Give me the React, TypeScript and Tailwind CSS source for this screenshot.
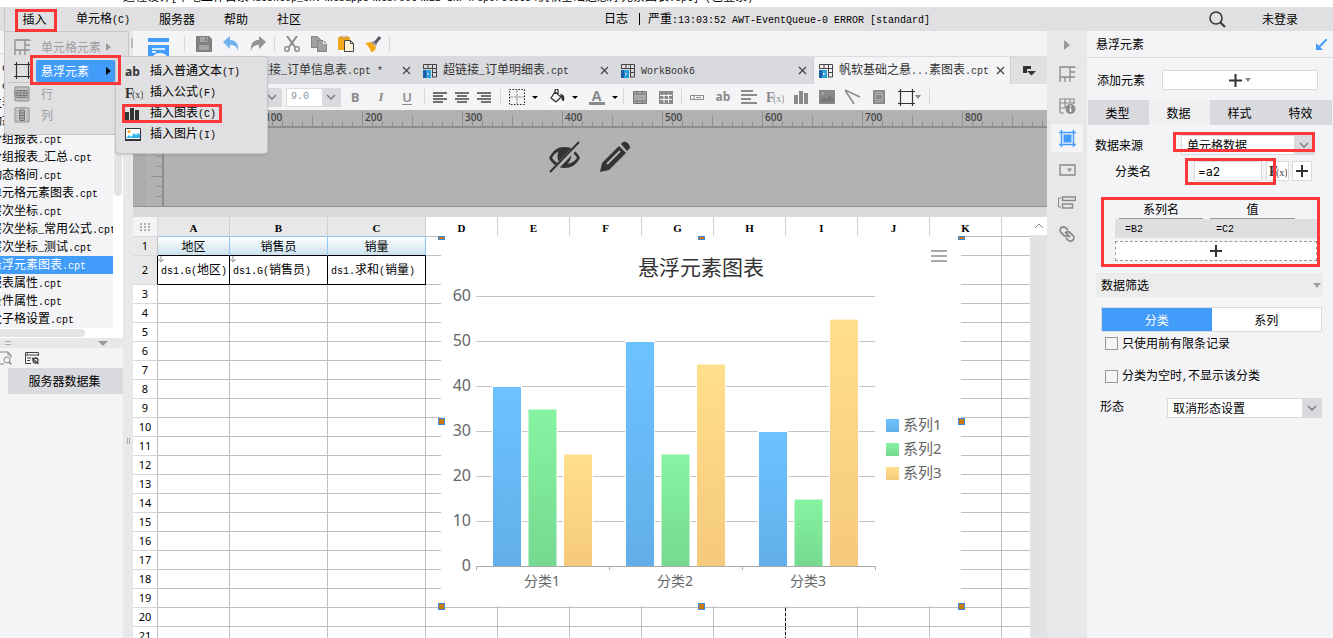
import { Fragment, type ReactNode } from 'react';

const MARK = 'pointer-events-none absolute z-40 border-[3px] border-[#fb3737]';

const files = [
  't.cpt',
  't.cpt',
  '主表.cpt',
  '动态.cpt',
  '分组报表.cpt',
  '分组报表_汇总.cpt',
  '动态格间.cpt',
  '单元格元素图表.cpt',
  '层次坐标.cpt',
  '层次坐标_常用公式.cpt',
  '层次坐标_测试.cpt',
  '悬浮元素图表.cpt',
  '报表属性.cpt',
  '条件属性.cpt',
  '父子格设置.cpt',
];

const columns = ['A', 'B', 'C', 'D', 'E', 'F', 'G', 'H', 'I', 'J', 'K', ''];

const series = [
  { name: '系列1', fill: 'url(#blue)', values: [40, 50, 30] },
  { name: '系列2', fill: 'url(#green)', values: [35, 25, 15] },
  { name: '系列3', fill: 'url(#yellow)', values: [25, 45, 55] },
];

// Latin runs use a half-width mono face next to the full-width characters
function T({ children }: { children: string }) {
  const parts = children.split(/([\x20-\x7e]+)/);
  return (
    <>
      {parts.map((part, i) =>
        i % 2 ? (
          <span key={i} className="font-['Liberation_Mono',monospace] text-[10px] whitespace-pre">
            {part}
          </span>
        ) : (
          <Fragment key={i}>{part}</Fragment>
        )
      )}
    </>
  );
}

function Icon({ w = 16, h = 16, children }: { w?: number; h?: number; children: ReactNode }) {
  return (
    <svg width={w} height={h} viewBox={`0 0 ${w} ${h}`} fill="none" className="shrink-0" aria-hidden="true">
      {children}
    </svg>
  );
}

function Chevron() {
  return (
    <Icon w={10} h={6}>
      <path d="M1 1l4 4 4-4" stroke="#777" strokeWidth="1.3" />
    </Icon>
  );
}

function Plus({ size = 13 }: { size?: number }) {
  return (
    <Icon w={size} h={size}>
      <path d={`M${size / 2} 0v${size}M0 ${size / 2}h${size}`} stroke="#333" strokeWidth="2" />
    </Icon>
  );
}

function Fx({ color = '#333' }: { color?: string }) {
  return (
    <Icon w={18} h={14}>
      <text x="0" y="12" fontSize="14" fontWeight="700" fill={color} fontFamily="Liberation Serif, serif">F</text>
      <text x="7" y="12" fontSize="10" fill={color} fontFamily="Liberation Serif, serif">(x)</text>
    </Icon>
  );
}

function Bars({ color = '#333' }: { color?: string }) {
  return (
    <Icon w={14} h={14}>
      <path d="M0 5h4v9H0zM5 1h4v13H5zM10 3h4v11h-4z" fill={color} />
    </Icon>
  );
}

function CellIcon({ color = '#8a8a8a' }: { color?: string }) {
  return (
    <Icon w={17} h={17}>
      <path d="M1 .5v15.500M1 1h10M11 1v10M1 11h15M11 6h5M11 1h5M6 11v5M11 11v5M16 1v1" stroke={color} strokeWidth="1.300" />
    </Icon>
  );
}

function FrameIcon({ color = '#333' }: { color?: string }) {
  return (
    <Icon w={17} h={17}>
      <path d="M2.500 0v17M14.500 0v17M0 2.500h17M0 14.500h17" stroke={color} strokeWidth="1.2" />
    </Icon>
  );
}

function BookIcon() {
  return (
    <Icon w={14} h={14}>
      <path d="M.5 5V.5h13v12.500H10M.5 4.500h13M5 .5v4M9.500 .5v13M9.500 8.500h4" stroke="#444" strokeWidth="1" />
      <path d="M0 6h4v8H0z" fill="#1c5fa8" />
      <path d="M3 6h5v8H3v-3h2.500V9H3z" fill="#27a0dc" />
    </Icon>
  );
}

function Sep({ className = 'mx-[5px]' }: { className?: string }) {
  return <span className={`h-4 w-px shrink-0 bg-[#d8d8dc] ${className}`} />;
}

function ToolButton({ label, className = 'w-[26px]', children }: { label: string; className?: string; children: ReactNode }) {
  return (
    <button aria-label={label} className={`flex h-5 shrink-0 items-center justify-center ${className}`}>
      {children}
    </button>
  );
}

function InsertMenu() {
  return (
    <div className="absolute top-6 left-0 z-30 w-[125px] rounded-b border border-[#c6c6ca] bg-[#e0e0e2] pt-[3px] pb-[9px] text-[#9c9c9f]">
      <button className="flex h-6 w-full items-center pl-[9px]">
        <CellIcon color="#8f8f92" />
        <span className="ml-[10px]">单元格元素</span>
        <span className="ml-[5px] border-y-4 border-l-[5px] border-y-transparent border-l-[#999]" />
      </button>
      <div className="relative flex h-[23px] items-center pl-[9px]">
        <FrameIcon />
        <button className="absolute right-[13px] left-[31px] flex h-[22px] items-center rounded-xs bg-[#429cf9] pl-[5px] text-white">
          悬浮元素
          <span className="ml-[17px] border-y-4 border-l-[5px] border-y-transparent border-l-black" />
        </button>
        <span className={`${MARK} -top-1 left-[25px] h-[30px] w-[91px]`} />
      </div>
      <div className="mx-[3px] h-px bg-[#c6c6ca]" />
      <button className="flex h-[21px] w-full items-center pl-[9px]">
        <Icon>
          <path d="M1 1h14v14H1zM0 5h2v5H0z" fill="#c0c0c2" stroke="#8f8f92" />
          <path d="M3 4.500h10v7H3zM3 7h10M3 9.500h10M6.500 4.500v7M10 4.500v7" stroke="#77777a" />
        </Icon>
        <span className="ml-[11px]">行</span>
      </button>
      <button className="flex h-[21px] w-full items-center pl-[9px]">
        <Icon>
          <path d="M1 1h14v14H1zM5 0h6" fill="#d4d4d6" stroke="#8f8f92" />
          <path d="M5.500 3v10.500h5V3zM5.500 6h5M5.500 8.500h5M5.500 11h5" fill="#aaa" stroke="#77777a" />
          <path d="M3 3v11M13 3v11" stroke="#8f8f92" strokeDasharray="1.500 1" />
        </Icon>
        <span className="ml-[11px]">列</span>
      </button>

      <div className="absolute top-6 left-[110px] w-[153px] rounded border border-[#c6c6ca] bg-[#e0e0e2] pt-1 pb-2 text-black shadow-sm">
        {[
          { text: '插入普通文本(T)', icon: <b className="font-['Open_Sans',sans-serif] text-xs leading-none text-[#333]">ab</b> },
          { text: '插入公式(F)', icon: <Fx /> },
          { text: '插入图表(C)', icon: <Bars />, marked: true },
          {
            text: '插入图片(I)',
            icon: (
              <Icon w={16} h={13}>
                <path d="M.5.5h15v12H.5z" fill="#fff" stroke="#333" />
                <path d="M1 10l3-3 2 2 3-4 2 2 2-2 2 2v3H1z" fill="#35b5ee" />
                <circle cx="4" cy="3.500" r="1.500" fill="#f5a623" />
                <path d="M0 11h16v2H0z" fill="#333" />
              </Icon>
            ),
          },
        ].map(item => (
          <button key={item.text} className="relative flex h-[21px] w-full items-center pl-[9px]">
            <span className="mr-[9px] flex w-4 shrink-0 items-center justify-start">{item.icon}</span>
            <span className="whitespace-nowrap">
              <T>{item.text}</T>
            </span>
            {item.marked && <span className={`${MARK} top-px left-[6px] h-[19px] w-[100px]`} />}
          </button>
        ))}
      </div>
    </div>
  );
}

function MenuBar() {
  return (
    <nav className="relative z-20 flex h-6 shrink-0 items-center bg-[#e0e0e2]">
      <div className="relative ml-1 h-6 w-[53px] border-x border-[#c6c6ca]">
        <button className="h-6 w-full pl-2">插入</button>
        <span className={`${MARK} top-[2px] left-[10px] h-[23px] w-[42px]`} />
      </div>
      <div className="absolute top-0 left-1">
        <InsertMenu />
      </div>
      <button className="ml-[19px] w-[83px] text-left">
        <T>单元格(C)</T>
      </button>
      <button className="w-[65px] text-left">服务器</button>
      <button className="w-[53px] text-left">帮助</button>
      <button>社区</button>
      <div className="ml-auto w-[605px] whitespace-nowrap">
        日志<span className="mr-2 ml-[11px] inline-block h-3 w-px bg-black align-middle" />
        <T>严重:13:03:52 AWT-EventQueue-0 ERROR [standard]</T>
      </div>
      <button aria-label="搜索">
        <Icon w={17} h={17}>
          <circle cx="7" cy="7" r="6" stroke="#333" strokeWidth="1.500" />
          <path d="M11.500 11.500l4.500 4.500" stroke="#333" strokeWidth="2" />
        </Icon>
      </button>
      <button className="mr-[35px] ml-9">未登录</button>
    </nav>
  );
}

function LeftPanel() {
  return (
    <aside className="flex w-[123px] shrink-0 flex-col overflow-hidden bg-[#f4f4f7]">
      <div className="h-[23px] shrink-0 border-b border-[#dcdce0]" />
      <div className="flex pt-1">
        <ul className="min-w-0 flex-1 overflow-hidden">
          {files.map((file, i) => (
            <li key={i} className={`flex h-[18px] items-center whitespace-nowrap ${i === 11 ? 'bg-[#429cf9] text-white' : ''}`}>
              <span className="-ml-[10px]">
                <T>{file}</T>
              </span>
            </li>
          ))}
        </ul>
        <div className="w-[10px] shrink-0 bg-white px-px">
          <div className="h-[138px] rounded-b bg-[#e4e4e6]" />
        </div>
      </div>
      <div className="flex h-[10px] shrink-0 items-center bg-white pb-px">
        <div className="h-2 w-[85px] rounded-r bg-[#e4e4e6]" />
      </div>
      <div className="flex h-[10px] shrink-0 items-center justify-between bg-[#e8e8e8] pr-[15px] pl-[5px]">
        <span className="h-1 w-[6px] border-y border-[#aaa]" />
        <span className="border-x-[5px] border-t-[5px] border-x-transparent border-t-[#999]" />
      </div>
      <div className="flex h-5 shrink-0 items-center gap-[13px]">
        <button aria-label="预览数据">
          <Icon w={12} h={14}>
            <path d="M0 1h8l3 3v3M8 1v3h3M0 13h4" stroke="#888" />
            <circle cx="7" cy="9" r="3" stroke="#888" />
            <path d="M9 11l2.500 2.500" stroke="#888" strokeWidth="1.500" />
          </Icon>
        </button>
        <button aria-label="编辑数据集">
          <Icon w={14} h={14}>
            <path d="M13.500 5V1.500H.5v11H6M.5 4h13M2 2.800h1M2 7h4M2 9.500h3" stroke="#444" />
            <path d="M7 7l6.500 6" stroke="#444" strokeWidth="1.300" />
            <circle cx="10.500" cy="9.500" r="2.500" stroke="#444" strokeWidth="1.300" />
          </Icon>
        </button>
      </div>
      <div className="flex h-[26px] shrink-0 pl-2">
        <button className="flex-1 bg-[#d9dade] pr-[2px]">服务器数据集</button>
      </div>
    </aside>
  );
}

function TopTools() {
  return (
    <div className="flex h-[25px] shrink-0 items-center bg-[#f4f4f7]">
      <button aria-label="模板" className="ml-[15px] self-end">
        <Icon w={21} h={18}>
          <path d="M0 0h21v4H0zM0 7h21v11h-2a8 6 0 0 0-14 0H0z" fill="#429cf9" />
          <path d="M4 11h13M4 14h4" stroke="#fff" strokeWidth="1.500" />
        </Icon>
      </button>
      <Sep className="mr-[5px] ml-[15px]" />
      <ToolButton label="保存" className="w-[27px]">
        <Icon>
          <path d="M0 1a1 1 0 0 1 1-1h12l3 3v12a1 1 0 0 1-1 1H1a1 1 0 0 1-1-1z" fill="#808083" />
          <path d="M4 1h8v5H4zM3 9h10v5H3z" fill="#a5a5a8" />
          <path d="M9 2h2v3H9z" fill="#808083" />
        </Icon>
      </ToolButton>
      <ToolButton label="撤销" className="w-[27px]">
        <Icon>
          <path d="M0 6l7-6v4c6 0 9 4 8 11-1-4-3-6-8-6v4z" fill="#74b2ee" />
        </Icon>
      </ToolButton>
      <ToolButton label="重做" className="w-[27px]">
        <Icon>
          <path d="M16 6L9 0v4C3 4 0 8 1 15c1-4 3-6 8-6v4z" fill="#929295" />
        </Icon>
      </ToolButton>
      <Sep className="mx-[3px]" />
      <ToolButton label="剪切" className="w-[27px]">
        <Icon>
          <path d="M3 0l8 11M13 0L5 11" stroke="#8a8a8d" strokeWidth="2" />
          <circle cx="3" cy="13" r="2.200" stroke="#8a8a8d" strokeWidth="1.500" />
          <circle cx="13" cy="13" r="2.200" stroke="#8a8a8d" strokeWidth="1.500" />
        </Icon>
      </ToolButton>
      <ToolButton label="复制" className="w-[27px]">
        <Icon>
          <path d="M.5.5h6l3 3v8h-9z" fill="#a0a0a3" stroke="#858588" />
          <path d="M6.500 4.500h6l3 3v8h-9z" fill="#a0a0a3" stroke="#858588" />
          <path d="M12.500 4.500v3h3" stroke="#f4f4f7" />
        </Icon>
      </ToolButton>
      <ToolButton label="粘贴" className="w-[27px]">
        <Icon>
          <path d="M0 1h12v13H0z" fill="#f2aa16" />
          <path d="M3 0h6v2H3z" fill="#fff" stroke="#b87818" />
          <path d="M6.500 4.500h6l3 3v8h-9z" fill="#fff3da" stroke="#444" />
          <path d="M12.500 4.500v3h3" stroke="#444" />
        </Icon>
      </ToolButton>
      <ToolButton label="格式刷" className="w-[27px]">
        <Icon>
          <path d="M15 1L10 7" stroke="#5c5866" strokeWidth="3" />
          <path d="M8 5l4 3-1 2-5-3.500z" fill="#8d8797" />
          <path d="M0 7l6-1 5 5c0 3-3 5-5 5-1-4-3-6-6-9z" fill="#f2aa16" />
        </Icon>
      </ToolButton>
      <Sep className="mx-[3px]" />
    </div>
  );
}

function DocTabs() {
  const tabs = ['超链接_订单信息表.cpt *', '超链接_订单明细表.cpt', 'WorkBook6', '帆软基础之悬...素图表.cpt'];
  return (
    <div className="flex h-7 shrink-0 border-t border-[#dcdce0] bg-[#d9dade] text-[#333]">
      <div className="w-[86px] shrink-0" />
      {tabs.map((tab, i) => (
        <div
          key={tab}
          className={`flex w-[198px] shrink-0 items-center border-x px-[5px] ${i === 3 ? 'border-[#cfcfd3] bg-[#f4f4f7]' : 'border-transparent'}`}
        >
          <BookIcon />
          <button className="ml-[6px] flex-1 text-left whitespace-nowrap">
            <T>{tab}</T>
          </button>
          <button aria-label="关闭">
            <Icon w={9} h={9}>
              <path d="M1 1l7 7M8 1L1 8" stroke="#444" strokeWidth="1.200" />
            </Icon>
          </button>
        </div>
      ))}
      <button aria-label="更多标签" className="flex flex-1 items-center bg-[#e0e0e2] pl-3">
        <Icon w={13} h={11}>
          <path d="M0 1h8v3H4v4H0z" fill="#333" />
          <path d="M4 6h9l-4.500 4.500z" fill="#333" />
        </Icon>
      </button>
    </div>
  );
}

function Caret() {
  return <span className="border-x-[3px] border-t-[3px] border-x-transparent border-t-black" />;
}

function FormatBar() {
  const grey = '#8a8a8d';
  return (
    <div className="flex h-[26px] shrink-0 items-center overflow-hidden bg-[#f4f4f7]">
      <div className="relative ml-[19px] flex h-[19px] w-[130px] shrink-0 items-center justify-end border border-[#d9dade] bg-[#d9dade] pr-1">
        <select aria-label="字体" className="absolute inset-0 w-full appearance-none opacity-0">
          <option>宋体</option>
        </select>
        <Chevron />
      </div>
      <div className="relative ml-1 flex h-[19px] w-[55px] shrink-0 items-center justify-end border border-[#d9dade] bg-[#d9dade] pr-1">
        <select
          aria-label="字号"
          className="absolute inset-y-0 left-0 w-[35px] appearance-none bg-white pl-1 font-['Liberation_Mono',monospace] text-[10px] text-[#8496a6]"
        >
          <option>9.0</option>
        </select>
        <Chevron />
      </div>
      <div className="ml-px flex font-['Open_Sans',sans-serif] text-[13px] text-[#8a8a8d]">
        <ToolButton label="加粗"><b>B</b></ToolButton>
        <ToolButton label="倾斜"><i className="font-['Liberation_Serif',serif] font-bold">I</i></ToolButton>
        <ToolButton label="下划线"><span className="font-semibold underline underline-offset-2">U</span></ToolButton>
      </div>
      <Sep className="mx-1" />
      {['M0 1h14M0 4h10M0 7h14M0 10h10', 'M0 1h14M2 4h10M0 7h14M2 10h10', 'M0 1h14M4 4h10M0 7h14M4 10h10'].map((d, i) => (
        <ToolButton key={d} label={['左对齐', '居中', '右对齐'][i]} className="w-[22px]">
          <Icon w={14} h={11}>
            <path d={d} stroke="#444" strokeWidth="1.400" />
          </Icon>
        </ToolButton>
      ))}
      <Sep />
      <div className="flex gap-[6px]">
        <ToolButton label="边框" className="w-[34px] gap-[7px]">
          <Icon>
            <path d="M.5.5h15v15H.5z" stroke="#222" strokeDasharray="1.500 1.500" />
            <path d="M8 1v14M1 8h14" stroke="#888" strokeDasharray="3 1" />
          </Icon>
          <Caret />
        </ToolButton>
        <ToolButton label="填充" className="w-[34px] gap-[7px]">
          <Icon>
            <path d="M0 13h16v3H0z" fill="#fff" />
            <path d="M6 3l6 5-5 5-5-4zM6 5V1.500a1.500 1.500 0 0 1 3 0V6" stroke="#333" strokeWidth="1.300" />
            <path d="M11 5c4 0 5 3 4 7-2 0-2.500-1-2.500-3z" fill="#333" />
          </Icon>
          <Caret />
        </ToolButton>
        <ToolButton label="字体颜色" className="w-[34px] gap-[7px]">
          <span className="h-4 w-4 border-b-[3px] border-[#8a8a8d] text-center font-['Open_Sans',sans-serif] text-sm leading-[13px] font-bold text-[#8a8a8d]">A</span>
          <Caret />
        </ToolButton>
      </div>
      <Sep className="mx-[3px]" />
      <ToolButton label="合并">
        <Icon w={14} h={13}>
          <path d="M.5.5h13v12H.5zM.5 3h13M.5 10h13M4 0v3M9.500 0v3M4 10v3M9.500 10v3" fill="#a9a9ac" stroke="#77777a" />
        </Icon>
      </ToolButton>
      <ToolButton label="取消合并">
        <Icon w={14} h={13}>
          <path d="M0 0h14v13H0z" fill={grey} />
          <path d="M1 4.500h12M1 8.500h12M5 3v9M9.500 3v9" stroke="#f4f4f7" />
        </Icon>
      </ToolButton>
      <Sep className="mx-[2px]" />
      <ToolButton label="控件">
        <Icon w={14} h={5}>
          <path d="M.5.5h13v4H.5zM4 0v5M6 2.500h5" stroke={grey} />
        </Icon>
      </ToolButton>
      <ToolButton label="文本">
        <b className="font-['Open_Sans',sans-serif] text-xs leading-none text-[#8a8a8d]">ab</b>
      </ToolButton>
      <ToolButton label="富文本">
        <Icon w={16} h={14}>
          <path d="M0 1h12M0 5h16M0 9h10M0 13h16" stroke={grey} strokeWidth="1.800" />
        </Icon>
      </ToolButton>
      <ToolButton label="公式"><Fx color={grey} /></ToolButton>
      <ToolButton label="图表"><Bars color={grey} /></ToolButton>
      <ToolButton label="图片">
        <Icon w={16} h={14}>
          <path d="M0 0h16v14H0z" fill={grey} />
          <path d="M1 11l4-4 3 2 3-4 4 4v3H1z" fill="#77777a" />
          <circle cx="4" cy="3.500" r="1.200" fill="#aaa" />
        </Icon>
      </ToolButton>
      <ToolButton label="斜线">
        <Icon>
          <path d="M0 1l15 7M0 1l9 14" stroke={grey} strokeWidth="1.500" />
        </Icon>
      </ToolButton>
      <ToolButton label="子报表">
        <Icon w={12} h={14}>
          <path d="M0 0h12v14H0z" fill={grey} />
          <path d="M2 2.500h8M2 11.500h8M2.500 4.500h7v5h-7z" stroke="#b5b5b8" />
        </Icon>
      </ToolButton>
      <ToolButton label="悬浮元素" className="w-[34px]">
        <FrameIcon />
        <span className="border-x-[3px] border-t-4 border-x-transparent border-t-[#888]" />
      </ToolButton>
      <Sep className="mx-[3px]" />
    </div>
  );
}

function RulerArea() {
  const ticks = Array.from({ length: 89 }, (_, i) => i);
  return (
    <div className="relative shrink-0 bg-[#b2b2b2]">
      <div className="h-[18px] overflow-hidden">
        <svg width="100%" height="18" fontFamily="Open Sans, sans-serif" fontSize="10" fontWeight="600" fill="#444">
          {ticks.map(i => {
            const x = 29 + i * 10;
            const top = i % 10 === 0 ? 1 : i % 5 === 0 ? 6 : 11;
            return (
              <Fragment key={i}>
                <path d={`M${x}.5 ${top}V16`} stroke="#909090" />
                {i > 0 && i % 10 === 0 && <text x={x + 3} y="11">{i * 10}</text>}
              </Fragment>
            );
          })}
          <path d="M29 17h3000" stroke="#8d8d8d" strokeWidth="2" />
        </svg>
      </div>
      <div className="flex h-[79px] border-b border-[#909090]">
        <div className="w-[13px] bg-[#acacac]" />
        <svg width="18" height="78">
          {[8, 18, 28, 38, 48, 58, 68].map(y => (
            <path key={y} d={`M${y === 48 ? 5 : 11} ${y}.5H16`} stroke="#909090" />
          ))}
          <path d="M17 0v78" stroke="#8d8d8d" strokeWidth="2" />
        </svg>
        <div className="flex flex-1 items-start justify-center gap-[18px] pt-[13px] pr-[33px]">
          <button aria-label="隐藏">
            <Icon w={33} h={33}>
              <path d="M1 17c4-8 9-11 15.500-11S28 9 32 17c-4 7-9 10-15.500 10S5 24 1 17z" fill="#333" />
              <path d="M4 17c2-4 4-5.500 6.500-6.500-2 5-1 9 2 12.500C9 22 6 20 4 17zM29 17c-2-4-4-5.500-6.500-6.500 2 5 0 9-3 12.500C24 22 27 20 29 17z" fill="#b2b2b2" />
              <path d="M3 32L31 3" stroke="#b2b2b2" strokeWidth="5" />
              <path d="M2 31L31 1" stroke="#333" strokeWidth="2" />
            </Icon>
          </button>
          <button aria-label="编辑">
            <Icon w={32} h={33}>
              <path d="M1 31l2-9L20 5l7 7-17 17z" fill="#333" />
              <path d="M8 23L21 10" stroke="#b2b2b2" strokeWidth="2" />
              <path d="M22 3l2-2c3-1 7 2 7 6l-3 3z" fill="#333" />
            </Icon>
          </button>
        </div>
      </div>
    </div>
  );
}

function FloatChart() {
  // value 0 sits at y=330 and every 10 units take 45px
  const toY = (v: number) => 330 - v * 4.5;
  return (
    <div className="absolute top-[19px] left-[308px] h-[370px] w-[520px] bg-white">
      <svg width="520" height="370" fontFamily="Noto Sans, Noto Sans CJK SC, sans-serif" fill="#666">
        <defs>
          <linearGradient id="blue" x2="0" y2="1"><stop stopColor="#6dc3ff" /><stop offset="1" stopColor="#62aeea" /></linearGradient>
          <linearGradient id="green" x2="0" y2="1"><stop stopColor="#86f4a2" /><stop offset="1" stopColor="#76d98f" /></linearGradient>
          <linearGradient id="yellow" x2="0" y2="1"><stop stopColor="#ffdf8c" /><stop offset="1" stopColor="#f6c97c" /></linearGradient>
        </defs>
        <text x="260" y="39" fontSize="21" fill="#333" textAnchor="middle">悬浮元素图表</text>
        <path d="M490 15h16M490 20h16M490 25h16" stroke="#aaa" strokeWidth="2" />
        {[60, 50, 40, 30, 20, 10, 0].map(v => (
          <Fragment key={v}>
            <path d={`M35 ${toY(v) + 0.5}H434`} stroke="#c4c4c4" />
            <text x="30" y={toY(v) + 5} fontSize="16" textAnchor="end">{v}</text>
          </Fragment>
        ))}
        {series.map((s, i) =>
          s.values.map((v, j) => (
            <rect key={`${i}-${j}`} x={51.5 + j * 133 + i * 35.5} y={toY(v) + 0.5} width="29" height={v * 4.5} fill={s.fill} stroke="#fff" />
          ))
        )}
        <path d="M35 330.500H434M35.500 330v4M168.500 330v4M301.500 330v4M434.500 330v4" stroke="#aaa" />
        {['分类1', '分类2', '分类3'].map((label, i) => (
          <text key={label} x={101 + i * 133} y="350" fontSize="14" textAnchor="middle">{label}</text>
        ))}
        {series.map((s, i) => (
          <Fragment key={s.name}>
            <rect x="445" y={183 + i * 24} width="13" height="13" fill={s.fill} />
            <text x="462" y={194 + i * 24} fontSize="15">{s.name}</text>
          </Fragment>
        ))}
      </svg>
      {['top-0 -left-[3px] h-1', 'top-0 left-[257px] h-1', 'top-0 left-[517px] h-1', 'top-[182px] -left-[3px] h-[7px]', 'top-[182px] left-[517px] h-[7px]', '-bottom-1 -left-[3px] h-[7px]', '-bottom-1 left-[257px] h-[7px]', '-bottom-1 left-[517px] h-[7px]'].map(pos => (
        <span key={pos} className={`absolute w-[7px] border border-[#3b87e0] bg-[#c87a10] ${pos}`} />
      ))}
    </div>
  );
}

function Sheet() {
  const rows = Array.from({ length: 21 }, (_, i) => i + 1);
  const data: Record<number, string[]> = {
    1: ['地区', '销售员', '销量'],
    2: ['ds1.G(地区)', 'ds1.G(销售员)', 'ds1.求和(销量)'],
  };
  const cellStyle = (row: number, col: number) => {
    if (row === 1 && col < 3) return 'border-[#92c6f5] border-b-black bg-gradient-to-b from-white to-[#cbe1ec] text-center';
    if (row === 2 && col < 3) return 'border-black pl-[3px]';
    return 'border-[#bfbfbf]';
  };
  return (
    <div className="flex min-h-0 flex-1">
      <div className="relative min-w-0 flex-1 overflow-hidden bg-white">
        <table className="w-full table-fixed border-separate border-spacing-0">
          <colgroup>
            <col className="w-[25px]" />
            <col className="w-[72px]" />
            <col className="w-[98px]" />
            <col className="w-[98px]" />
            {columns.slice(3, 11).map(c => (
              <col key={c} className="w-[72px]" />
            ))}
            <col />
          </colgroup>
          <thead>
            <tr className="h-5 font-['Liberation_Serif',serif] text-[11px]">
              <th className="border-r border-b border-[#d9d9dc] bg-[#f4f4f7] p-0">
                <div className="flex justify-center">
                  <Icon w={10} h={8}>
                    <path d="M0 1h2M4 1h2M8 1h2M0 4h2M4 4h2M8 4h2M0 7h2M4 7h2M8 7h2" stroke="#999" strokeWidth="1.600" />
                  </Icon>
                </div>
              </th>
              {columns.map((c, i) => (
                <th
                  key={i}
                  className={`border-b p-0 pt-[2px] leading-[14px] ${i < 3 ? 'border-r border-r-[#d0d0d3] border-b-[#92c6f5] bg-[#e8e8e8]' : i < 11 ? 'border-r border-r-[#d0d0d3] border-b-[#bfbfbf]' : 'border-b-[#bfbfbf]'}`}
                >
                  {c}
                </th>
              ))}
            </tr>
          </thead>
          <tbody>
            {rows.map(r => (
              <tr key={r} className={r === 2 ? 'h-[29px]' : 'h-[19px]'}>
                <th
                  className={`border-r border-b border-b-[#d9d9dc] p-0 font-['Noto_Sans',sans-serif] text-[11px] leading-[14px] font-normal ${r < 3 ? 'bg-[#e8e8e8]' : ''} ${r === 2 ? 'border-r-black' : 'border-r-[#bfbfbf]'}`}
                >
                  {r}
                </th>
                {columns.map((_, c) => (
                  <td key={c} className={`relative border-b p-0 leading-[14px] whitespace-nowrap ${c < 11 ? 'border-r' : ''} ${cellStyle(r, c)}`}>
                    {data[r]?.[c] && <T>{data[r][c]}</T>}
                    {r === 2 && c < 2 && (
                      <span className="absolute top-0 left-0">
                        <Icon w={6} h={7}>
                          <path d="M3 0v6M0 3l3 3 3-3" stroke="#888" />
                        </Icon>
                      </span>
                    )}
                    {r > 19 && c === 7 && <span className="absolute top-0 -right-px h-full border-r border-dashed border-black" />}
                  </td>
                ))}
              </tr>
            ))}
          </tbody>
        </table>
        <FloatChart />
      </div>
      <div className="w-[17px] shrink-0 bg-[#e2e2e2]">
        <button aria-label="向上滚动" className="flex h-[18px] w-full items-center justify-center bg-white">
          <Icon w={10} h={6}>
            <path d="M1 5l4-4 4 4" stroke="#888" />
          </Icon>
        </button>
      </div>
    </div>
  );
}

function SideStrip() {
  const grey = '#8a8a8d';
  return (
    <div className="flex w-10 shrink-0 flex-col items-center bg-[#e8e8e8]">
      <button aria-label="收起" className="flex h-[27px] w-8 items-center justify-center">
        <span className="border-y-[5px] border-l-[6px] border-y-transparent border-l-[#999]" />
      </button>
      <ToolSlot label="单元格元素"><CellIcon /></ToolSlot>
      <ToolSlot label="单元格属性">
        <Icon w={17} h={17}>
          <path d="M1 15V1h14v5M1 5h14M1 10h5M6 1v9M11 1v4M1 15h4" stroke={grey} strokeWidth="1.200" />
          <circle cx="11.500" cy="11" r="5" fill={grey} />
          <path d="M11.500 10v4M11.500 7.500v1.500" stroke="#fff" strokeWidth="1.500" />
        </Icon>
      </ToolSlot>
      <ToolSlot label="悬浮元素" active>
        <Icon w={17} h={17}>
          <path d="M2.500 0v17M14.500 0v17M0 2.500h17M0 14.500h17" stroke="#429cf9" strokeWidth="1.500" />
          <path d="M4.500 4.500h8v8h-8z" fill="#429cf9" />
        </Icon>
      </ToolSlot>
      <ToolSlot label="控件设置">
        <Icon w={17} h={12}>
          <path d="M1 1h15v10H1z" stroke={grey} strokeWidth="1.400" />
          <path d="M8 4.500h5L10.500 8z" fill={grey} />
        </Icon>
      </ToolSlot>
      <ToolSlot label="条件属性">
        <Icon w={18} h={13}>
          <path d="M3 2H.5v9H3" stroke={grey} />
          <path d="M4.500 1h13v3.500h-13zM4.500 8h10v4h-10z" stroke={grey} strokeWidth="1.500" />
        </Icon>
      </ToolSlot>
      <ToolSlot label="超级链接">
        <Icon>
          <path d="M9 4L7 2a3.200 3.200 0 0 0-5 4.500l3 3a3.200 3.200 0 0 0 4 0M7 12l2 2a3.200 3.200 0 0 0 5-4.500l-3-3a3.200 3.200 0 0 0-4 0M6 6l5 5" stroke={grey} strokeWidth="1.800" />
        </Icon>
      </ToolSlot>
    </div>
  );
}

function ToolSlot({ label, active, children }: { label: string; active?: boolean; children: ReactNode }) {
  return (
    <button aria-label={label} className={`my-[2px] flex h-7 w-8 items-center justify-center ${active ? 'bg-[#f4f4f7]' : ''}`}>
      {children}
    </button>
  );
}

function RightPanel() {
  return (
    <aside className="flex w-[246px] shrink-0 flex-col bg-[#f4f4f7]">
      <div className="flex h-[27px] items-center justify-between border-b border-[#d9dade] pr-[6px] pl-[9px]">
        悬浮元素
        <button aria-label="弹出">
          <Icon w={11} h={11}>
            <path d="M11 0L3 8" stroke="#429cf9" strokeWidth="2" />
            <path d="M0 4v7h7z" fill="#429cf9" />
          </Icon>
        </button>
      </div>
      <div className="mt-3 flex h-5 items-center justify-between pr-[15px] pl-[10px]">
        添加元素
        <button aria-label="添加" className="flex h-5 w-[156px] items-center justify-center gap-[3px] border border-[#d9dade] bg-white">
          <Plus />
          <span className="border-x-[3px] border-t-4 border-x-transparent border-t-[#888]" />
        </button>
      </div>
      <div className="mt-[10px] ml-px flex h-[25px] pr-px">
        {['类型', '数据', '样式', '特效'].map((tab, i) => (
          <button key={tab} className={`flex-1 pr-[2px] ${i === 1 ? 'bg-[#f0f0f2]' : 'bg-[#d9dade]'}`}>
            {tab}
          </button>
        ))}
      </div>
      <div className="relative mt-[10px] flex h-5 items-center justify-between pr-[18px] pl-2">
        <label htmlFor="source">数据来源</label>
        <div className="flex h-5 w-[134px] border border-[#d9dade] bg-[#d9dade]">
          <select id="source" className="flex-1 appearance-none bg-white pl-[5px]">
            <option>单元格数据</option>
          </select>
          <span className="flex w-5 items-center justify-center"><Chevron /></span>
        </div>
        <span className={`${MARK} -top-[3px] left-[86px] h-5 w-[142px]`} />
      </div>
      <div className="relative mt-[6px] flex h-5 items-center pl-7">
        <label htmlFor="category" className="w-[79px]">分类名</label>
        <input id="category" defaultValue="=a2" className="h-5 w-[68px] border border-[#d9dade] bg-white pl-[3px] font-['Inter','Liberation_Sans',sans-serif]" />
        <button aria-label="公式" className="ml-1 flex h-5 w-[23px] items-center justify-center border border-[#d9dade] bg-white"><Fx /></button>
        <button aria-label="添加分类" className="ml-[3px] flex h-5 w-5 items-center justify-center border border-[#d9dade] bg-white"><Plus size={12} /></button>
        <span className={`${MARK} -top-[3px] left-[98px] h-[27px] w-[91px]`} />
      </div>
      <div className="relative mt-4 mr-[13px] ml-[14px] border-[3px] border-[#fb3737] pb-[3px] pl-[11px]">
        <table className="w-full table-fixed border-separate border-spacing-0">
          <colgroup>
            <col className="w-[91px]" />
            <col />
          </colgroup>
          <thead>
            <tr className="h-[19px]">
              <th className="p-0 pr-[3px] pl-1 font-normal"><div className="border-b border-[#999] leading-[18px]">系列名</div></th>
              <th className="p-0 pr-[22px] pl-1 font-normal"><div className="border-b border-[#999] leading-[18px]">值</div></th>
            </tr>
          </thead>
          <tbody>
            <tr className="h-[19px] bg-[#dfdfe2]">
              <td className="p-0 pl-[10px]"><T>=B2</T></td>
              <td className="p-0 pl-[10px]"><T>=C2</T></td>
            </tr>
          </tbody>
        </table>
        <button aria-label="添加系列" className="mt-[3px] flex h-5 w-full items-center justify-center border border-dashed border-[#999] bg-white">
          <Plus size={12} />
        </button>
      </div>
      <div className="mt-[6px] mr-[10px] ml-[9px] flex h-6 items-center justify-between bg-[#ececec] pr-[2px] pl-[5px]">
        数据筛选
        <span className="border-x-4 border-t-[5px] border-x-transparent border-t-[#a0a0a0]" />
      </div>
      <div className="mt-[10px] mr-[11px] ml-[14px] flex h-[25px] border border-[#d9dade] bg-white">
        <button className="flex-1 bg-[#429cf9] text-white">分类</button>
        <button className="flex-1">系列</button>
      </div>
      <label className="mt-[3px] ml-[18px] flex h-4 items-center gap-1">
        <input type="checkbox" className="h-[13px] w-[13px] appearance-none border border-[#999] bg-[#f4f4f7]" />
        只使用前有限条记录
      </label>
      <label className="mt-[17px] ml-[18px] flex h-4 items-center gap-1">
        <input type="checkbox" className="h-[13px] w-[13px] appearance-none border border-[#999] bg-[#f4f4f7]" />
        <span><T>分类为空时,不显示该分类</T></span>
      </label>
      <div className="mt-[14px] flex h-5 items-start justify-between pr-[11px] pl-[13px]">
        <label htmlFor="shape">形态</label>
        <div className="flex h-5 w-[155px] border border-[#d9dade] bg-[#d9dade]">
          <select id="shape" className="flex-1 appearance-none bg-white pl-[5px]">
            <option>取消形态设置</option>
          </select>
          <span className="flex w-[19px] items-center justify-center"><Chevron /></span>
        </div>
      </div>
    </aside>
  );
}

export default function App() {
  return (
    <div className="flex h-screen flex-col overflow-hidden bg-white font-['Noto_Sans_CJK_SC',sans-serif] text-[12px] leading-[16px] text-black">
      <header className="flex h-[7px] shrink-0 items-end overflow-hidden pl-[123px] whitespace-nowrap">
        <span>
          <T>{'远程设计[本地工作目录\\desktop_env\\webapps\\webroot\\WEB-INF\\reportlets\\帆软基础之悬浮元素图表.cpt] (已登录)'}</T>
        </span>
      </header>
      <MenuBar />
      <div className="flex min-h-0 flex-1">
        <LeftPanel />
        <div className="flex w-[10px] shrink-0 flex-col items-center bg-[#e8e8e8]">
          <span className="mt-[7px] h-[10px] w-[2px] self-end bg-[#bbb]" />
          <span className="mt-[390px] h-[6px] w-[3px] border-x border-[#aaa]" />
        </div>
        <main className="flex min-w-0 flex-1 flex-col overflow-hidden">
          <TopTools />
          <DocTabs />
          <FormatBar />
          <RulerArea />
          <div className="h-[10px] shrink-0 bg-[#dadadc]" />
          <Sheet />
        </main>
        <SideStrip />
        <RightPanel />
      </div>
    </div>
  );
}
